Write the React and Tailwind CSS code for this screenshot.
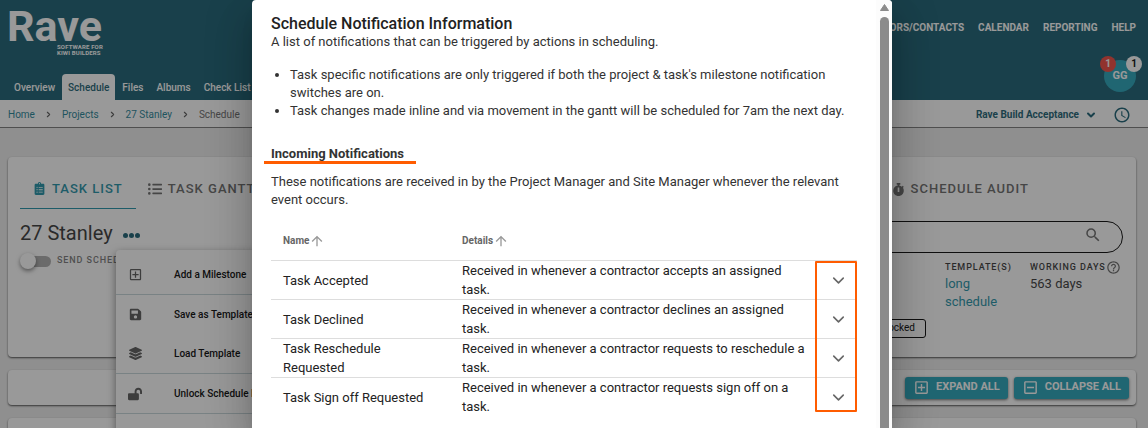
import React, { useState } from 'react';
import { FaClipboardList, FaLayerGroup, FaListUl, FaLockOpen, FaSave, FaStopwatch, FaUndo } from 'react-icons/fa';
import { MdAccessTime, MdArrowUpward, MdHelpOutline, MdOutlineAddBox, MdOutlineIndeterminateCheckBox, MdSearch } from 'react-icons/md';
import { ChevronDown, ChevronRight } from 'lucide-react';

const projectTabs = ['Overview', 'Schedule', 'Files', 'Albums', 'Check List'];
const mainLinks = ['SUBCONTRACTORS/CONTACTS', 'CALENDAR', 'REPORTING', 'HELP'];
const crumbs = ['Home', 'Projects', '27 Stanley'];

const menuItems = [
  { label: 'Add a Milestone', icon: <MdOutlineAddBox size={15} />, divider: true },
  { label: 'Save as Template', icon: <FaSave size={13} /> },
  { label: 'Load Template', icon: <FaLayerGroup size={13} />, divider: true },
  { label: 'Unlock Schedule Baseline', icon: <FaLockOpen size={14} />, divider: true },
  { label: 'Roll back Schedule', icon: <FaUndo size={12} /> },
];

const notifications = [
  { name: 'Task Accepted', details: 'Received in whenever a contractor accepts an assigned task.' },
  { name: 'Task Declined', details: 'Received in whenever a contractor declines an assigned task.' },
  { name: 'Task Reschedule Requested', details: 'Received in whenever a contractor requests to reschedule a task.' },
  { name: 'Task Sign off Requested', details: 'Received in whenever a contractor requests sign off on a task.' },
];

export default function App() {
  return (
    <div className="relative h-screen overflow-hidden bg-[#ededed] font-['Roboto',sans-serif] text-[#333333]">
      <Header />
      <Breadcrumbs />
      <main className="flex flex-col gap-[13px] pl-2 pr-3 pt-[29px]">
        <ScheduleCard />
        <section className="flex h-[35px] items-center justify-end gap-1.5 rounded bg-white pr-[7px] shadow-[0_1px_2px_rgba(0,0,0,0.7)]">
          <ActionButton icon={<MdOutlineAddBox size={17} />} label="EXPAND ALL" />
          <ActionButton icon={<MdOutlineIndeterminateCheckBox size={17} />} label="COLLAPSE ALL" />
        </section>
        <section className="h-20 rounded bg-white shadow-[0_1px_2px_rgba(0,0,0,0.7)]" />
      </main>

      {/* Dialog on a dimmed page */}
      <div className="absolute inset-0 z-20 flex justify-center bg-[#212121]/46 pr-1">
        <NotificationDialog />
      </div>
    </div>
  );
}

function Header() {
  return (
    <header className="flex h-[100px] justify-between bg-[#145c6f] pr-3 text-white">
      <div className="flex flex-col justify-between">
        <a href="#home" className="ml-2 mt-2 flex w-[94px] flex-col items-end">
          <span className="text-[43px] font-bold leading-9">Rave</span>
          <span className="w-[45px] whitespace-nowrap text-[6px] font-bold leading-[6px] tracking-wide">
            SOFTWARE FOR<br />KIWI BUILDERS
          </span>
        </a>
        <nav className="ml-2 flex gap-px text-[10px] font-medium">
          {projectTabs.map((tab) => (
            <a
              key={tab}
              href="#tab"
              className={`flex h-[26px] items-center whitespace-nowrap rounded-t px-1.5 ${tab === 'Schedule' ? 'bg-white text-[#145c6f]' : ''}`}
            >
              {tab}
            </a>
          ))}
        </nav>
      </div>
      <div className="flex flex-col items-end">
        <nav className="flex gap-3.5 pt-5 text-[10px] font-bold leading-4">
          {mainLinks.map((link) => (
            <a key={link} href="#main">{link}</a>
          ))}
        </nav>
        <button className="relative mt-6 h-8 w-8 rounded-full bg-[#21a1b7] text-[11px] font-bold">
          GG
          <span className="absolute -left-1 -top-1 h-4 w-4 rounded-full bg-[#f0443a] text-[10px] leading-4">1</span>
          <span className="absolute -right-1.5 -top-1 h-4 w-4 rounded-full bg-white text-[10px] leading-4 text-black">1</span>
        </button>
      </div>
    </header>
  );
}

function Breadcrumbs() {
  return (
    <div className="flex h-7 items-center justify-between border-b border-[#777777] bg-white pl-2 pr-[17px] pt-0.5 text-[10px]">
      <nav className="flex items-center gap-[9px]">
        {crumbs.map((crumb) => (
          <React.Fragment key={crumb}>
            <a href="#crumb" className="text-[#1a8094]">{crumb}</a>
            <ChevronRight size={9} strokeWidth={3} className="text-[#555555]" />
          </React.Fragment>
        ))}
        <span className="text-[#666666]">Schedule</span>
      </nav>
      <div className="flex items-center gap-4 text-[#145c6f]">
        <button className="flex items-center gap-1.5 font-bold">
          Rave Build Acceptance
          <ChevronDown size={12} strokeWidth={4} />
        </button>
        <button aria-label="History"><MdAccessTime size={18} /></button>
      </div>
    </div>
  );
}

function ScheduleCard() {
  const [sendSchedule, setSendSchedule] = useState(false);

  return (
    <section className="relative h-[200px] rounded bg-white px-3 pt-3 shadow-[0_1px_2px_rgba(0,0,0,0.7)]">
      <nav className="flex h-10 text-[13px] font-medium tracking-[1px] text-[#666666]">
        <a href="#list" className="flex items-center gap-1.5 border-b border-[#1a8fa5] px-[13px] text-[#1a8fa5]">
          <FaClipboardList size={13} /> TASK LIST
        </a>
        <a href="#gantt" className="flex items-center gap-1.5 px-3">
          <FaListUl size={14} /> TASK GANTT
        </a>
        <a href="#audit" className="ml-auto mr-[95px] flex items-center gap-1.5">
          <FaStopwatch size={13} /> SCHEDULE AUDIT
        </a>
      </nav>

      <div className="flex justify-between">
        <div>
          <div className="mt-3 flex items-center gap-2.5">
            <h1 className="text-xl leading-6">27 Stanley</h1>
            <button aria-label="More" className="flex gap-px pt-1">
              <i className="h-[5px] w-[5px] rounded-full bg-[#145c6f]" />
              <i className="h-[5px] w-[5px] rounded-full bg-[#145c6f]" />
              <i className="h-[5px] w-[5px] rounded-full bg-[#145c6f]" />
            </button>
          </div>
          <label className="mt-2 flex h-4 items-center gap-1.5 text-[9px] font-medium tracking-widest text-[#777777]">
            <span className="flex h-[11px] w-[31px] items-center rounded-full bg-linear-to-r from-transparent from-20% to-[#aaaaaa] to-20%">
              <input
                type="checkbox"
                checked={sendSchedule}
                onChange={() => setSendSchedule(!sendSchedule)}
                className="h-4 w-4 appearance-none rounded-full bg-white shadow-[0_2px_4px_rgba(0,0,0,0.5)] checked:ml-auto"
              />
            </span>
            SEND SCHEDULE
          </label>
        </div>

        <div className="mr-px mt-3 w-[500px]">
          <div className="flex h-8 items-center rounded-full border border-black pl-4 pr-5">
            <input type="search" aria-label="Search" className="min-w-0 flex-1 outline-none" />
            <MdSearch size={18} className="mb-1 text-[#666666]" />
          </div>
          <div className="flex justify-end pr-0.5 pt-1.5">
            <div className="w-[85px]">
              <h3 className="text-[9px] font-medium leading-4 tracking-widest">TEMPLATE(S)</h3>
              <a href="#template" className="block w-14 text-[13px] leading-[18px] text-[#1a8fa5]">long schedule</a>
            </div>
            <div className="w-[91px]">
              <h3 className="flex items-center justify-between whitespace-nowrap text-[9px] font-medium leading-4 tracking-widest">
                WORKING DAYS <MdHelpOutline size={15} className="shrink-0 text-[#666666]" />
              </h3>
              <p className="text-[13px] leading-[18px]">563 days</p>
            </div>
          </div>
          <span className="ml-auto mr-[197px] mt-2 block h-[19px] w-fit rounded-[3px] border border-black px-2.5 text-[10px] leading-4 text-black">
            Unlocked
          </span>
        </div>
      </div>

      <ul className="absolute left-[108px] top-[93px] z-10 w-60 rounded bg-white pt-[5px] text-[10px] font-medium text-black shadow-[0_3px_8px_rgba(0,0,0,0.5)]">
        {menuItems.map((item) => (
          <li key={item.label} className={item.divider ? 'border-b border-[#c5d5d8]' : ''}>
            <button className="flex h-[39px] w-full items-center pl-[11px]">
              <span className="flex w-4 justify-center text-[#555555]">{item.icon}</span>
              <span className="ml-[31px]">{item.label}</span>
            </button>
          </li>
        ))}
      </ul>
    </section>
  );
}

function ActionButton({ icon, label }) {
  return (
    <button className="flex h-[22px] items-center gap-1.5 rounded-[3px] bg-[#21a1b7] px-2 text-[11px] font-bold text-white shadow-[0_1px_3px_rgba(0,0,0,0.6)]">
      {icon}
      {label}
    </button>
  );
}

function NotificationDialog() {
  return (
    <div
      role="dialog"
      aria-labelledby="dialog-title"
      className="flex w-[640px] overflow-hidden rounded-t-sm bg-white shadow-[0_11px_15px_-7px_rgba(0,0,0,0.2),0_24px_38px_3px_rgba(0,0,0,0.14),0_9px_46px_8px_rgba(0,0,0,0.12)]"
    >
      <div className="flex-1 px-[19px] pt-[15px] text-[13px] leading-[18px]">
        <h2 id="dialog-title" className="text-base font-medium leading-[18px] text-[#222222]">Schedule Notification Information</h2>
        <p>A list of notifications that can be triggered by actions in scheduling.</p>
        <ul className="mt-[15px] list-disc pl-[19px]">
          <li>Task specific notifications are only triggered if both the project &amp; task's milestone notification switches are on.</li>
          <li>Task changes made inline and via movement in the gantt will be scheduled for 7am the next day.</li>
        </ul>

        <h3 className="relative mt-[25px] w-fit font-bold">
          Incoming Notifications
          <span className="absolute -left-[7px] -right-3 top-4 h-[3px] bg-[#ff5c00]" />
        </h3>
        <p className="mt-2.5">
          These notifications are received in by the Project Manager and Site Manager whenever the relevant event occurs.
        </p>

        <div className="relative mt-3">
          <table className="w-full table-fixed border-separate border-spacing-0 text-left text-[#222222]">
            <thead>
              <tr className="text-[10px] text-[#666666]">
                <SortHeader label="Name" width="w-[179px]" />
                <SortHeader label="Details" width="" />
                <th className="w-[42px] border-b border-[#dddddd]" />
              </tr>
            </thead>
            <tbody>
              {notifications.map((row) => (
                <tr key={row.name} className="leading-[19px] [&:not(:last-child)>td]:border-b [&>td]:border-[#dddddd]">
                  <td className="p-0 pl-3 pr-3">{row.name}</td>
                  <td className="p-0 pl-3 pr-2">{row.details}</td>
                  <td className="p-0">
                    <button aria-label={`Expand ${row.name}`} className="ml-3.5 flex h-5 items-center text-[#666666]">
                      <ChevronDown size={19} strokeWidth={2} />
                    </button>
                  </td>
                </tr>
              ))}
            </tbody>
          </table>
          {/* Highlight round the expand column */}
          <div className="pointer-events-none absolute bottom-1 right-0 top-10 w-[42px] rounded-[1px] border-2 border-[#ff5c00]" />
        </div>
      </div>

      <div className="flex w-4 flex-col items-center bg-[#fcfcfc] pt-1">
        <svg width="9" height="7" viewBox="0 0 9 7" className="shrink-0 text-[#8b8b8b]">
          <path d="M4.5 0.5 8.5 6.5H0.5Z" fill="currentColor" stroke="currentColor" strokeLinejoin="round" />
        </svg>
        <span className="mt-1.5 w-[9px] flex-1 rounded-t-full bg-[#8b8b8b]" />
      </div>
    </div>
  );
}

function SortHeader({ label, width }) {
  return (
    <th className={`h-10 border-b border-[#dddddd] p-0 pl-3 ${width}`}>
      <button className="flex items-center font-bold">
        {label}
        <MdArrowUpward size={16} className="text-[#999999]" />
      </button>
    </th>
  );
}
